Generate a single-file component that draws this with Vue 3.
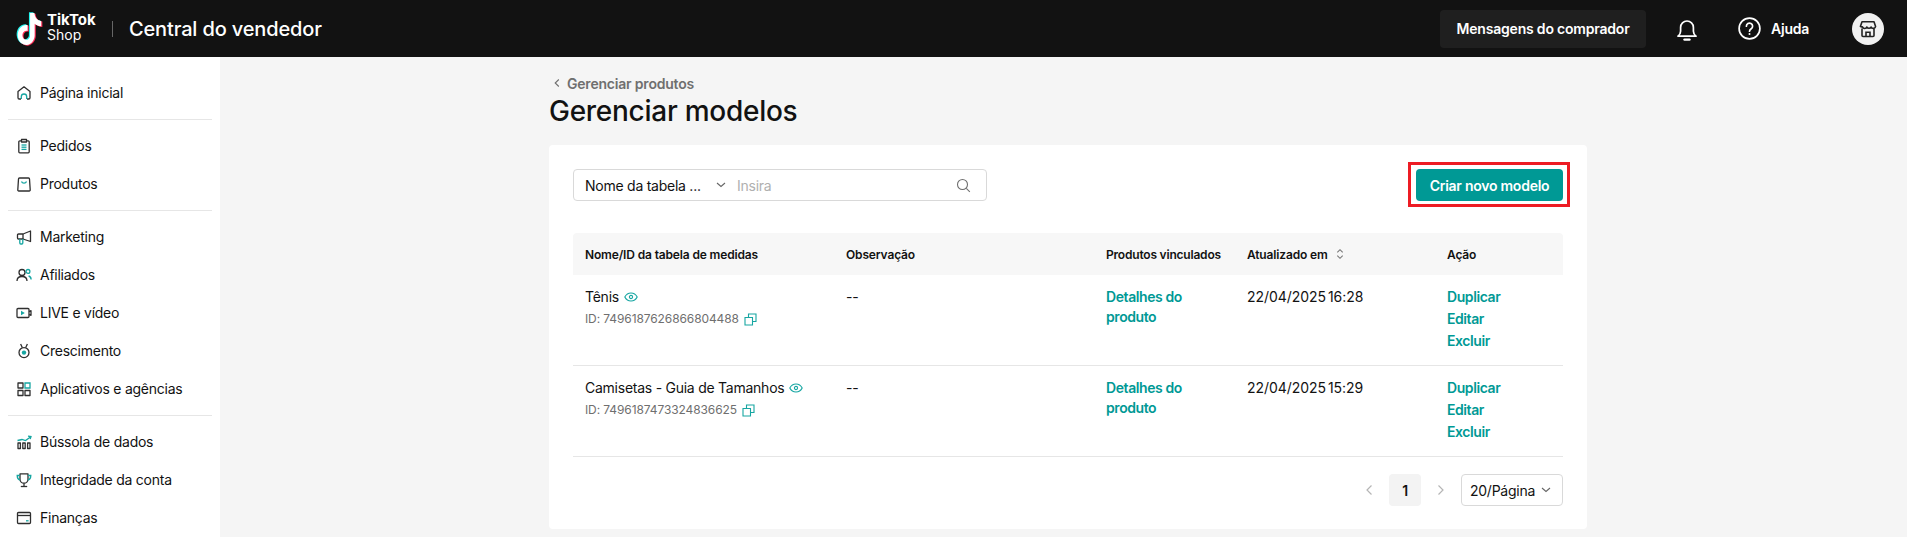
<script setup>
const groups = [
  [
    { label: 'Página inicial', dark: ['M5 14H3.2A1.2 1.2 0 0 1 2 12.8V6.6L8 1.8l6 4.8v6.2a1.2 1.2 0 0 1-1.2 1.2H11'], teal: ['M5.3 14v-2.3a2.7 2.7 0 0 1 5.4 0V14'] },
  ],
  [
    { label: 'Pedidos', dark: ['M5 2.8H3.8a1 1 0 0 0-1 1v10a1 1 0 0 0 1 1h8.4a1 1 0 0 0 1-1v-10a1 1 0 0 0-1-1H11', 'M5.5 1.5h5V4h-5z'], teal: ['M5.5 7h5', 'M5.5 9.2h5', 'M5.5 11.4h5'] },
    { label: 'Produtos', dark: ['M3.5 2h9a1 1 0 0 1 1 1l.7 10.8a1 1 0 0 1-1 1.2H2.8a1 1 0 0 1-1-1.2L2.5 3a1 1 0 0 1 1-1z'], teal: ['M5.5 5.5c.8 2.2 4.2 2.2 5 0'] },
  ],
  [
    { label: 'Marketing', dark: ['M14.5 2v10.5L7 10H2.5a1 1 0 0 1-1-1V6a1 1 0 0 1 1-1H7z', 'M7 5v5'], teal: ['M3.8 10v4a1 1 0 0 0 1 1h1a1 1 0 0 0 1-1v-4'] },
    { label: 'Afiliados', dark: ['M6 2.5a3 3 0 1 0 0 6 3 3 0 0 0 0-6z', 'M1 14c0-3 2.2-4.5 5-4.5s5 1.5 5 4.5'], teal: ['M12 2.5a1.9 1.9 0 1 0 0 3.8 1.9 1.9 0 0 0 0-3.8z', 'M12.6 9c1.5.4 2.500 1.800 2.500 3.500'] },
    { label: 'LIVE e vídeo', dark: ['M2 3.5h10a1 1 0 0 1 1 1v7a1 1 0 0 1-1 1H2a1 1 0 0 1-1-1v-7a1 1 0 0 1 1-1z', 'M13 6.500l2-.8v4.600l-2-.8'], tealFill: ['M5 5.800v4.400L8.800 8z'] },
    { label: 'Crescimento', dark: ['M8 4.600a5 5 0 1 0 0 10 5 5 0 0 0 0-10z', 'M4.600 1 6.400 4.800', 'M11.400 1 9.600 4.800'], tealFill: ['M8 7.400a2.200 2.200 0 1 0 0 4.400 2.200 2.200 0 0 0 0-4.400z'] },
    { label: 'Aplicativos e agências', dark: ['M2 2h5v5H2z', 'M2 9.500h5v5H2z', 'M9 9.500h5v5H9z'], teal: ['M9 2h5v5H9z'] },
  ],
  [
    { label: 'Bússola de dados', dark: ['M2 9h2.400v5.500H2z', 'M6.800 9h2.400v5.500H6.800z', 'M11.600 9H14v5.500h-2.400z'], teal: ['M1.500 6.500 6 5.500l3.500 1L14.500 3', 'M12 2.200l3 .3-.8 2.600'] },
    { label: 'Integridade da conta', dark: ['M4 1.800h8v5.400a4 4 0 0 1-8 0z', 'M8 11.200V14', 'M4.800 14.500h6.400'], teal: ['M4 3.500H1.200c0 2.600 1 4 2.800 4.500', 'M12 3.500h2.800c0 2.600-1 4-2.800 4.500'] },
    { label: 'Finanças', dark: ['M2.500 2.500h11a1 1 0 0 1 1 1v9a1 1 0 0 1-1 1h-11a1 1 0 0 1-1-1v-9a1 1 0 0 1 1-1z', 'M1.500 5.500h13'], teal: ['M10 10.800h2.600'] },
  ],
]

const rows = [
  { name: 'Tênis', id: 'ID: 7496187626866804488', date: '22/04/2025', time: '16:28' },
  { name: 'Camisetas - Guia de Tamanhos', id: 'ID: 7496187473324836625', date: '22/04/2025', time: '15:29' },
]

const note = 'M12.525.02c1.31-.02 2.61-.01 3.91-.02.08 1.53.63 3.09 1.75 4.17 1.12 1.11 2.7 1.62 4.24 1.79v4.03c-1.44-.05-2.89-.35-4.2-.97-.57-.26-1.1-.59-1.62-.93-.01 2.92.01 5.84-.02 8.75-.08 1.4-.54 2.79-1.35 3.94-1.31 1.92-3.58 3.17-5.91 3.21-1.43.08-2.86-.31-4.08-1.03-2.02-1.19-3.44-3.37-3.65-5.71-.02-.5-.03-1-.01-1.49.18-1.9 1.12-3.72 2.58-4.96 1.66-1.44 3.98-2.13 6.15-1.72.02 1.48-.04 2.96-.04 4.44-.99-.32-2.15-.23-3.02.37-.63.41-1.11 1.04-1.36 1.75-.21.51-.15 1.07-.14 1.61.24 1.64 1.82 3.02 3.5 2.87 1.12-.01 2.19-.66 2.77-1.61.19-.33.4-.67.41-1.06.1-1.79.06-3.57.07-5.36.01-4.03-.01-8.05.02-12.07z'
</script>

<template>
  <div class="page">
    <header class="topbar">
      <div class="brand">
        <svg class="logo" viewBox="0 0 24 24" width="27" height="32" preserveAspectRatio="none">
          <path :d="note" fill="#25f4ee" transform="translate(-1 -.5)" />
          <path :d="note" fill="#fe2c55" transform="translate(1 .5)" />
          <path :d="note" fill="#fff" />
        </svg>
        <div class="wordmark"><b>TikTok</b><span>Shop</span></div>
        <i class="brand-sep"></i>
        <div class="app-title">Central do vendedor</div>
      </div>
      <div class="top-actions">
        <button class="msg-btn">Mensagens do comprador</button>
        <svg class="bell" width="22" height="24" viewBox="0 0 22 24" fill="none" stroke="#fff" stroke-width="1.7">
          <path d="M2 18.2h18c-1.4-1.2-2.6-2.6-2.6-5V9.4a6.4 6.4 0 0 0-12.8 0v3.8c0 2.4-1.2 3.8-2.6 5z" stroke-linejoin="round" />
          <path d="M8.5 21.6h5" stroke-width="2.4" stroke-linecap="round" />
        </svg>
        <div class="help">
          <svg width="23" height="23" viewBox="0 0 23 23" fill="none" stroke="#fff" stroke-width="1.7">
            <circle cx="11.5" cy="11.5" r="10.4" />
            <path d="M8.4 9.2a3.1 3.1 0 1 1 4.8 2.6c-1 .7-1.7 1.2-1.7 2.4" stroke-linecap="round" />
            <circle cx="11.5" cy="17" r="1" fill="#fff" stroke="none" />
          </svg>
          <span>Ajuda</span>
        </div>
        <div class="avatar">
          <svg width="18" height="18" viewBox="0 0 18 18" fill="none" stroke="#222" stroke-width="1.6">
            <path d="M3 1.800h12l1.600 4.600a2.300 2.300 0 0 1-4.400.6 2.500 2.500 0 0 1-4.400 0 2.300 2.300 0 0 1-4.400-.2 2.300 2.300 0 0 1-2-.4z" stroke-linejoin="round" />
            <path d="M3 8.500v7a1 1 0 0 0 1 1h10a1 1 0 0 0 1-1v-7" />
            <path d="M7 16.500v-4.200h4v4.200" />
          </svg>
        </div>
      </div>
    </header>

    <div class="body">
      <aside class="sidebar">
        <section v-for="(group, g) in groups" :key="g" class="nav-group">
          <a v-for="item in group" :key="item.label" class="nav-item">
            <svg class="nav-icon" width="16" height="16" viewBox="0 0 16 16" fill="none">
              <path v-for="d in item.dark" :key="d" :d="d" stroke="#2f2f2f" stroke-width="1.3" stroke-linejoin="round" />
              <path v-for="d in item.teal" :key="d" :d="d" stroke="#16a6a2" stroke-width="1.3" />
              <path v-for="d in item.tealFill" :key="d" :d="d" fill="#16a6a2" />
            </svg>
            <span>{{ item.label }}</span>
          </a>
        </section>
      </aside>

      <main class="content">
        <div class="crumb">
          <svg width="8" height="10" viewBox="0 0 8 10" fill="none" stroke="#6f6f6f" stroke-width="1.1"><path d="M5.800 1.500 2.200 5l3.600 3.500" /></svg>
          <span>Gerenciar produtos</span>
        </div>
        <h1>Gerenciar modelos</h1>

        <div class="card">
          <div class="toolbar">
            <div class="search">
              <span class="search-type">Nome da tabela ...</span>
              <svg class="chev" width="12" height="8" viewBox="0 0 12 8" fill="none" stroke="#666" stroke-width="1.100"><path d="M2 2l4 3.500L10 2" /></svg>
              <span class="placeholder">Insira</span>
              <svg class="glass" width="15" height="15" viewBox="0 0 15 15" fill="none" stroke="#6f6f6f" stroke-width="1.100"><circle cx="6.500" cy="6.500" r="5" /><path d="M10.300 10.300 13.800 13.800" /></svg>
            </div>
            <div class="cta-wrap">
              <button class="cta">Criar novo modelo</button>
              <div class="highlight"></div>
            </div>
          </div>

          <div class="table">
            <div class="tr thead">
              <div>Nome/ID da tabela de medidas</div>
              <div>Observação</div>
              <div class="nowrap">Produtos vinculados</div>
              <div class="sort-cell">
                Atualizado em
                <svg width="8" height="12" viewBox="0 0 8 12" fill="none" stroke="#777" stroke-width="1.100"><path d="M1.300 4.300 4 1.700l2.700 2.600" /><path d="M1.300 7.700 4 10.300l2.700-2.600" /></svg>
              </div>
              <div>Ação</div>
            </div>
            <div v-for="row in rows" :key="row.id" class="tr tbody">
              <div>
                <div class="name">
                  {{ row.name }}
                  <svg width="14" height="14" viewBox="0 0 14 14" fill="none" stroke="#16a6a2" stroke-width="1.100"><path d="M.8 7C2.200 4.300 4.400 3 7 3s4.800 1.300 6.200 4c-1.400 2.700-3.600 4-6.200 4S2.200 9.700.8 7z" /><circle cx="7" cy="7" r="1.600" /></svg>
                </div>
                <div class="row-id">
                  {{ row.id }}
                  <svg width="13" height="13" viewBox="0 0 13 13" fill="none" stroke="#16a6a2" stroke-width="1.100"><path d="M1 4.500h7.500V12H1z" /><path d="M4.500 4.500V1H12v7.500H8.500" /></svg>
                </div>
              </div>
              <div>--</div>
              <div class="link details">Detalhes do produto</div>
              <div class="date"><span>{{ row.date }}</span><span>{{ row.time }}</span></div>
              <div class="actions link">
                <span>Duplicar</span><span>Editar</span><span>Excluir</span>
              </div>
            </div>
          </div>

          <div class="pager">
            <svg width="8" height="12" viewBox="0 0 8 12" fill="none" stroke="#b5b5b5" stroke-width="1.200"><path d="M6.500 1.500 2 6l4.500 4.500" /></svg>
            <div class="page-num">1</div>
            <svg width="8" height="12" viewBox="0 0 8 12" fill="none" stroke="#b5b5b5" stroke-width="1.200"><path d="M1.500 1.500 6 6l-4.500 4.500" /></svg>
            <div class="page-size">
              <span>20/Página</span>
              <svg width="12" height="8" viewBox="0 0 12 8" fill="none" stroke="#666" stroke-width="1.100"><path d="M2 2l4 3.500L10 2" /></svg>
            </div>
          </div>
        </div>
      </main>
    </div>
  </div>
</template>

<style>
html, body { margin: 0; padding: 0; overflow: hidden; background: #f5f5f5; }
</style>

<style scoped>
.page {
  width: 1907px;
  height: 537px;
  overflow: hidden;
  font-family: Inter, "Liberation Sans", sans-serif;
  font-size: 14px;
  letter-spacing: -0.25px;
  color: #121212;
  background: #f5f5f5;
  display: flex;
  flex-direction: column;
}
.topbar {
  height: 57px;
  flex: none;
  background: #121212;
  color: #fff;
  display: flex;
  align-items: center;
  justify-content: space-between;
  padding: 0 23px 0 16px;
}
.brand { display: flex; align-items: center; }
.logo { display: block; margin-right: 4px; overflow: visible; }
.wordmark {
  display: flex;
  flex-direction: column;
  width: 65px;
  padding-bottom: 1px;
}
.wordmark b { font-size: 15px; line-height: 14px; font-weight: 700; letter-spacing: 0; }
.wordmark span { font-size: 14px; line-height: 16px; font-weight: 400; letter-spacing: 0; }
.brand-sep { width: 1px; height: 16px; background: #666; margin-right: 16px; }
.app-title { font-size: 20px; font-weight: 500; letter-spacing: -0.15px; }
.top-actions { display: flex; align-items: center; }
.msg-btn {
  width: 206px;
  height: 38px;
  border: 0;
  border-radius: 4px;
  background: #1f1f1f;
  color: #fff;
  font: 600 14px Inter, "Liberation Sans", sans-serif;
  letter-spacing: -0.2px;
  margin-right: 30px;
}
.bell { margin-right: 40px; margin-top: 2px; }
.help { display: flex; align-items: center; gap: 10px; font-weight: 600; font-size: 14px; margin-right: 43px; }
.help svg { display: block; }
.avatar {
  width: 32px;
  height: 32px;
  border-radius: 50%;
  background: #f1f1f1;
  display: flex;
  align-items: center;
  justify-content: center;
}
.body { flex: 1; display: flex; min-height: 0; }
.sidebar {
  width: 220px;
  flex: none;
  background: #fff;
  box-sizing: border-box;
  padding: 17px 8px 0;
}
.nav-group { border-bottom: 1px solid #e6e6e6; padding: 0 0 7px; margin-bottom: 7px; }
.nav-group:last-child { border-bottom: 0; }
.nav-item {
  height: 38px;
  display: flex;
  align-items: center;
  padding-left: 8px;
  gap: 8px;
  color: #121212;
}
.nav-item span { position: relative; top: -1px; }
.nav-icon { flex: none; }
.content {
  flex: 1;
  min-width: 0;
  padding: 0 320px 0 329px;
}
.crumb {
  display: flex;
  align-items: center;
  gap: 6px;
  height: 20px;
  margin-top: 16px;
  padding-left: 4px;
  color: #6f6f6f;
  font-weight: 600;
  letter-spacing: -0.2px;
  font-size: 14px;
}
h1 {
  margin: 0 0 16px;
  font-size: 28px;
  line-height: 36px;
  font-weight: 500;
  letter-spacing: -0.27px;
  color: #121212;
}
.card {
  background: #fff;
  border-radius: 4px;
  padding: 24px 24px 23px;
}
.toolbar { display: flex; justify-content: space-between; align-items: flex-start; margin-bottom: 32px; }
.search {
  width: 414px;
  height: 32px;
  box-sizing: border-box;
  border: 1px solid #d9d9d9;
  border-radius: 4px;
  display: flex;
  align-items: center;
  padding: 0 15px 0 11px;
}
.search-type { width: 130px; white-space: nowrap; }
.chev { margin-right: 10px; }
.placeholder { color: #b0b0b0; flex: 1; }
.cta-wrap { position: relative; }
.cta {
  display: block;
  width: 147px;
  height: 32px;
  border: 0;
  border-radius: 4px;
  background: #009995;
  color: #fff;
  font: 600 14px Inter, "Liberation Sans", sans-serif;
  letter-spacing: -0.25px;
}
.highlight {
  position: absolute;
  left: -8px;
  right: -7px;
  top: -7px;
  bottom: -6px;
  border: 3px solid #ed1c24;
  box-sizing: border-box;
  pointer-events: none;
}
.tr {
  display: grid;
  grid-template-columns: 261px 260px 141px 200px 128px;
  border-bottom: 1px solid #e6e6e6;
}
.tr > div { padding: 0 12px; box-sizing: border-box; min-width: 0; }
.thead {
  height: 42px;
  background: #f7f7f7;
  border-bottom: 0;
  border-radius: 4px 4px 0 0;
  align-items: center;
  font-size: 12px;
  font-weight: 600;
  letter-spacing: -0.15px;
}
.tr > .nowrap { white-space: nowrap; padding-right: 0; letter-spacing: -0.2px; }
.sort-cell { display: flex; align-items: center; gap: 8px; }
.tbody { height: 91px; box-sizing: border-box; padding-top: 12px; line-height: 20px; }
.name { display: flex; align-items: center; gap: 5px; height: 20px; }
.row-id { display: flex; align-items: center; gap: 5px; color: #6f6f6f; font-size: 12px; letter-spacing: -0.1px; height: 20px; margin-top: 2px; }
.link { color: #009995; font-weight: 600; letter-spacing: -0.42px; }
.tr > .details { padding-right: 30px; }
.date { display: flex; gap: 2px; letter-spacing: -0.05px; }
.actions { display: flex; flex-direction: column; gap: 2px; }
.pager { display: flex; justify-content: flex-end; align-items: center; margin-top: 17px; height: 32px; }
.page-num {
  width: 32px;
  height: 32px;
  margin: 0 16px;
  border-radius: 4px;
  background: #f3f3f3;
  display: flex;
  align-items: center;
  justify-content: center;
  font-weight: 600;
}
.page-size {
  width: 102px;
  height: 32px;
  margin-left: 16px;
  box-sizing: border-box;
  border: 1px solid #d9d9d9;
  border-radius: 4px;
  display: flex;
  align-items: center;
  justify-content: space-between;
  padding: 0 10px 0 8px;
}
</style>
